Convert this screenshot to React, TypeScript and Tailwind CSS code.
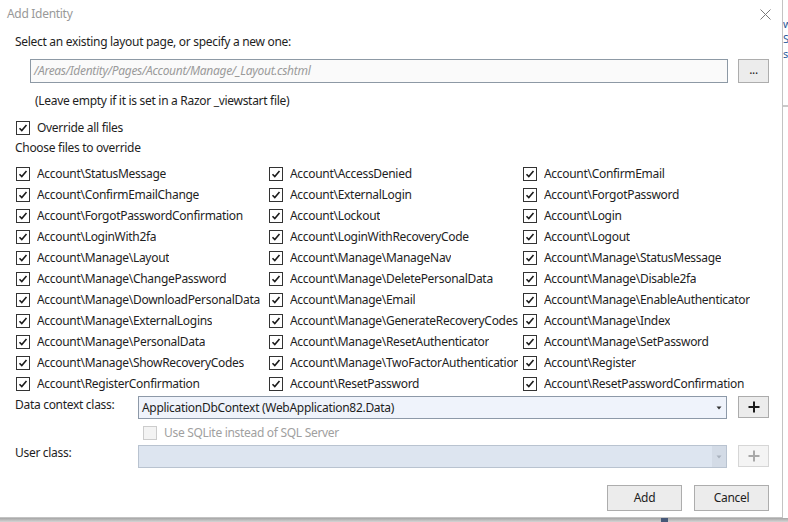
import React from 'react'

const files = [
  ['Account\\StatusMessage', 'Account\\AccessDenied', 'Account\\ConfirmEmail'],
  ['Account\\ConfirmEmailChange', 'Account\\ExternalLogin', 'Account\\ForgotPassword'],
  ['Account\\ForgotPasswordConfirmation', 'Account\\Lockout', 'Account\\Login'],
  ['Account\\LoginWith2fa', 'Account\\LoginWithRecoveryCode', 'Account\\Logout'],
  ['Account\\Manage\\Layout', 'Account\\Manage\\ManageNav', 'Account\\Manage\\StatusMessage'],
  ['Account\\Manage\\ChangePassword', 'Account\\Manage\\DeletePersonalData', 'Account\\Manage\\Disable2fa'],
  ['Account\\Manage\\DownloadPersonalData', 'Account\\Manage\\Email', 'Account\\Manage\\EnableAuthenticator'],
  ['Account\\Manage\\ExternalLogins', 'Account\\Manage\\GenerateRecoveryCodes', 'Account\\Manage\\Index'],
  ['Account\\Manage\\PersonalData', 'Account\\Manage\\ResetAuthenticator', 'Account\\Manage\\SetPassword'],
  ['Account\\Manage\\ShowRecoveryCodes', 'Account\\Manage\\TwoFactorAuthentication', 'Account\\Register'],
  ['Account\\RegisterConfirmation', 'Account\\ResetPassword', 'Account\\ResetPasswordConfirmation'],
]

const CheckBox = ({ checked = true, disabled = false }: { checked?: boolean; disabled?: boolean }) => (
  <span
    className={
      disabled
        ? 'w-[14px] h-[14px] shrink-0 border border-[#cccccc] bg-[#f3f3f3]'
        : 'w-[14px] h-[14px] shrink-0 border border-[#333333] bg-white flex items-center justify-center'
    }
  >
    {checked && !disabled && (
      <svg width="12" height="12" viewBox="0 0 12 12">
        <path d="M2.5 6.2 L4.8 8.6 L9.5 3" fill="none" stroke="#1a1a1a" strokeWidth="1.6" />
      </svg>
    )}
  </span>
)

const Arrow = ({ color }: { color: string }) => (
  <svg width="6" height="4" viewBox="0 0 6 4">
    <path d="M0.5 0.5 L5.5 0.5 L3 3.5 Z" fill={color} />
  </svg>
)

const Plus = ({ color }: { color: string }) => (
  <svg width="12" height="12" viewBox="0 0 12 12">
    <path d="M6 0.5 V11.5 M0.5 6 H11.5" stroke={color} strokeWidth="2" />
  </svg>
)

export default function App() {
  return (
    <div className="w-[788px] h-[522px] flex flex-col bg-[#f0f0f0] overflow-hidden font-['Noto_Sans',sans-serif] text-[12px] tracking-[-0.3px] text-[#1e1e1e]">
      <div className="flex h-[518px]">
        {/* Dialog */}
        <div className="w-[783px] h-full bg-white border-r border-b border-[#c3c3c3] flex flex-col">
          {/* Title */}
          <div className="h-[28px] flex items-center justify-between pl-[7px] pr-[11px]">
            <span className="text-[#999999]">Add Identity</span>
            <svg width="11" height="11" viewBox="0 0 11 11">
              <path d="M0.5 0.5 L10.5 10.5 M10.5 0.5 L0.5 10.5" stroke="#7a7a7a" strokeWidth="1" />
            </svg>
          </div>

          <div className="pl-[15px] pr-[13px] flex flex-col">
            <div className="mt-[6px] h-[16px] leading-[16px]">Select an existing layout page, or specify a new one:</div>

            <div className="mt-[9px] flex gap-[10px] pl-[15px]">
              <div className="w-[699px] h-[24px] border border-[#8d99a5] bg-[#fafafa] flex items-center pl-[3px] italic text-[#9a9a9a]">
                /Areas/Identity/Pages/Account/Manage/_Layout.cshtml
              </div>
              <div className="w-[31px] h-[24px] border border-[#adadad] bg-[#ececec] flex items-center justify-center leading-none pb-[2px]">
                ...
              </div>
            </div>

            <div className="mt-[10px] h-[16px] leading-[16px] pl-[20px]">
              (Leave empty if it is set in a Razor _viewstart file)
            </div>

            <div className="mt-[11px] h-[16px] flex items-center gap-[7px] pl-[1px]">
              <CheckBox />
              <span>Override all files</span>
            </div>

            <div className="mt-[4px] h-[16px] leading-[16px]">Choose files to override</div>

            <div className="mt-[7px] grid grid-cols-[253px_254px_1fr]">
              {files.map((row, ri) =>
                row.map((f, ci) => (
                  <div key={ri + '-' + ci} className="h-[21px] flex items-center gap-[7px] pl-[1px] pr-[4px] whitespace-nowrap overflow-hidden">
                    <CheckBox />
                    <span className="overflow-hidden">{f}</span>
                  </div>
                ))
              )}
            </div>

            {/* Data context class */}
            <div className="mt-[2px] flex items-start">
              <div className="w-[123px] pt-[1px] leading-[16px]">Data context class:</div>
              <div className="w-[589px] h-[23px] border border-[#8d99a8] bg-[#eff3fb] flex items-center justify-between pl-[3px] pr-[4px]">
                <span>ApplicationDbContext (WebApplication82.Data)</span>
                <Arrow color="#333333" />
              </div>
              <div className="ml-[11px] w-[31px] h-[22px] border border-[#acacac] bg-[#ececec] flex items-center justify-center">
                <Plus color="#1a1a1a" />
              </div>
            </div>

            <div className="mt-[6px] h-[15px] flex items-center gap-[7px] pl-[128px]">
              <CheckBox disabled />
              <span className="text-[#a0a0a0]">Use SQLite instead of SQL Server</span>
            </div>

            {/* User class */}
            <div className="mt-[5px] flex items-start">
              <div className="w-[123px] leading-[16px]">User class:</div>
              <div className="w-[589px] h-[23px] border border-[#b9c3d0] bg-[#dde5f0] flex justify-end">
                <div className="w-[14px] h-full bg-[#d3dbe6] flex items-center justify-center">
                  <Arrow color="#a9b2bd" />
                </div>
              </div>
              <div className="ml-[11px] w-[31px] h-[22px] border border-[#d6d6d6] bg-[#f4f4f4] flex items-center justify-center">
                <Plus color="#a8a8a8" />
              </div>
            </div>

            {/* Buttons */}
            <div className="mt-[17px] flex justify-end gap-[12px]">
              <div className="w-[75px] h-[26px] border border-[#adadad] bg-[#ececec] flex items-center justify-center">Add</div>
              <div className="w-[75px] h-[26px] border border-[#adadad] bg-[#ececec] flex items-center justify-center">Cancel</div>
            </div>
          </div>
        </div>

        {/* Background beyond the dialog */}
        <div className="flex-1 bg-white flex flex-col overflow-hidden text-[11px] leading-[15px] text-[#2a5a9a]">
          <div className="h-[16px]" />
          <div className="h-[15px] overflow-hidden">w</div>
          <div className="h-[15px] overflow-hidden">S</div>
          <div className="h-[15px] overflow-hidden">s</div>
          <div className="mt-[44px] h-[2px] bg-[#c9c9c9]" />
        </div>
      </div>
      <div className="h-[4px] bg-gradient-to-b from-[#a6a6a6] to-[#d5d5d5] flex">
        <div className="ml-[661px] w-[7px] h-full bg-[#475878]" />
      </div>
    </div>
  )
}
